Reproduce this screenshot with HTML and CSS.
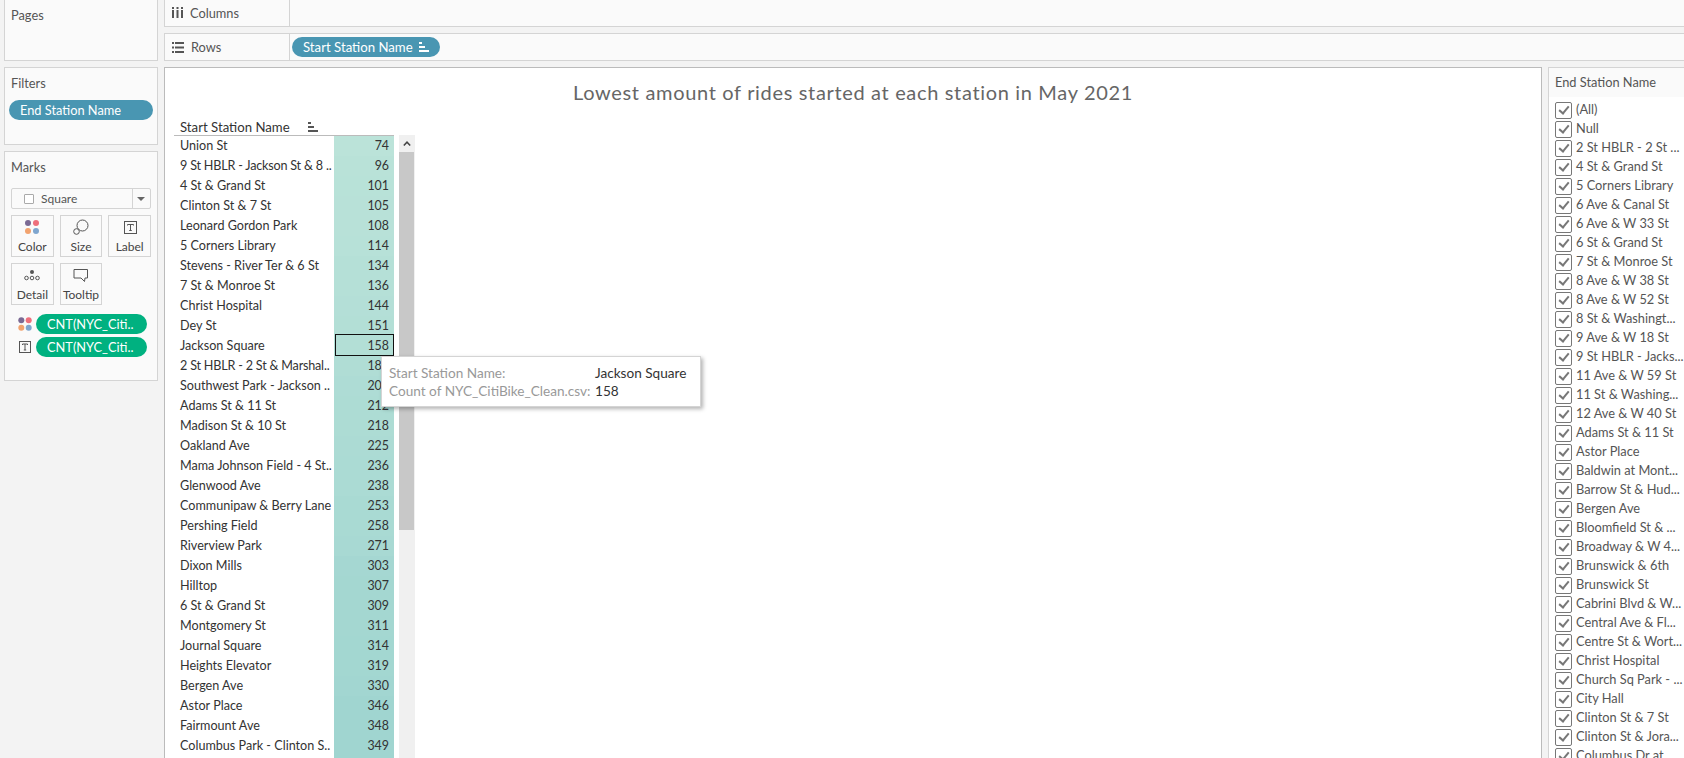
FILE: index.html
```html
<!DOCTYPE html>
<html lang="en">
<head>
    <meta charset="UTF-8">
    <meta name="viewport" content="width=device-width, initial-scale=1.0">
    <title>Lowest amount of rides started at each station in May 2021</title>
    <link rel="stylesheet" href="styles.css">
</head>
<body>
    <div class="page">
        <div class="side">
            <div class="card pages-card"><div class="card-title">Pages</div></div>
            <div class="card filters-card">
                <div class="card-title">Filters</div>
                <div class="chip chip-blue chip-filter">End Station Name</div>
            </div>
            <div class="card marks-card">
                <div class="card-title">Marks</div>
                <div class="mark-select">
                    <span class="square-box"></span>
                    <span class="mark-select-text">Square</span>
                    <span class="mark-select-arrow"></span>
                </div>
                <div class="mark-buttons">
                    <div class="mark-button">
                        <svg class="mark-icon" width="16" height="16" viewBox="0 0 16 16"><circle cx="4" cy="4" r="3" fill="#7b6a94"/><circle cx="12" cy="4" r="3" fill="#ee6f7c"/><circle cx="4" cy="12" r="3" fill="#f2a36f"/><circle cx="12" cy="12" r="3" fill="#7fa6cf"/></svg>
                        <span>Color</span>
                    </div>
                    <div class="mark-button">
                        <svg class="mark-icon" width="16" height="16" viewBox="0 0 16 16" fill="none" stroke="#555"><circle cx="9.500" cy="6.500" r="5.500"/><circle cx="3.500" cy="12.500" r="2.800" fill="#fafafa"/></svg>
                        <span>Size</span>
                    </div>
                    <div class="mark-button">
                        <svg class="mark-icon" width="16" height="16" viewBox="0 0 16 16" fill="none" stroke="#555"><rect x="2.500" y="2.500" width="12" height="12"/><path d="M5.500 6.500V5.500h6v1M8.500 5.500v6M7.200 11.500h2.600"/></svg>
                        <span>Label</span>
                    </div>
                    <div class="mark-button">
                        <svg class="mark-icon" width="16" height="16" viewBox="0 0 16 16" fill="none" stroke="#555"><circle cx="8" cy="5" r="2" fill="#555" stroke="none"/><circle cx="2.500" cy="11" r="1.800"/><circle cx="8" cy="11" r="1.800"/><circle cx="13.500" cy="11" r="1.800"/></svg>
                        <span>Detail</span>
                    </div>
                    <div class="mark-button">
                        <svg class="mark-icon" width="16" height="16" viewBox="0 0 16 16" fill="none" stroke="#555"><path d="M1 2.500h13.500v8.500h-2.500l-0.500 3.500-3.500-3.500H1z"/></svg>
                        <span>Tooltip</span>
                    </div>
                </div>
                <div class="mark-field">
                    <svg width="14" height="14" viewBox="0 0 14 14"><circle cx="3.300" cy="3.300" r="3" fill="#7b6a94"/><circle cx="10.700" cy="3.300" r="3" fill="#ee6f7c"/><circle cx="3.300" cy="10.700" r="3" fill="#f2a36f"/><circle cx="10.700" cy="10.700" r="3" fill="#7fa6cf"/></svg>
                    <div class="chip chip-green">CNT(NYC_Citi..</div>
                </div>
                <div class="mark-field">
                    <svg width="14" height="14" viewBox="0 0 14 14" fill="none" stroke="#555"><rect x="1.500" y="1.500" width="11" height="11"/><path d="M4.500 5V4h5v1M7 4v6M5.800 10h2.400"/></svg>
                    <div class="chip chip-green">CNT(NYC_Citi..</div>
                </div>
            </div>
        </div>

        <div class="main">
            <div class="shelf shelf-columns">
                <div class="shelf-label">
                    <svg width="11" height="11" viewBox="0 0 11 11" fill="#555"><path d="M0 0h2v2H0zM4.500 0h2v2h-2zM9 0h2v2H9zM0 3h2v8H0zM4.500 3h2v8h-2zM9 3h2v8H9z"/></svg>
                    <span>Columns</span>
                </div>
            </div>
            <div class="shelf shelf-rows">
                <div class="shelf-label">
                    <svg width="12" height="11" viewBox="0 0 12 11" fill="#555"><path d="M0 0h2v2H0zM3 0h9v2H3zM0 4.500h2v2H0zM3 4.500h9v2H3zM0 9h2v2H0zM3 9h9v2H3z"/></svg>
                    <span>Rows</span>
                </div>
                <div class="chip chip-blue chip-rows">
                    Start Station Name
                    <svg width="10" height="10" viewBox="0 0 10 10" fill="#fff"><path d="M0 0h3v2H0zM0 4h6v2H0zM0 8h10v2H0z"/></svg>
                </div>
            </div>

            <div class="work">
                <div class="viz">
                    <div class="viz-title">Lowest amount of rides started at each station in May 2021</div>
                    <div class="viz-body">
                        <div class="table">
                            <div class="table-head">
                                <span>Start Station Name</span>
                                <svg width="10" height="10" viewBox="0 0 10 10" fill="#555"><path d="M0 0h3v2H0zM0 4h6v2H0zM0 8h10v2H0z"/></svg>
                            </div>
                            <div class="row"><div class="name">Union St</div><div class="bar" style="background:#bbe3d9">74</div></div>
                            <div class="row"><div class="name name-tight">9 St HBLR - Jackson St &amp; 8 ..</div><div class="bar" style="background:#b9e2d8">96</div></div>
                            <div class="row"><div class="name">4 St &amp; Grand St</div><div class="bar" style="background:#b8e2d8">101</div></div>
                            <div class="row"><div class="name">Clinton St &amp; 7 St</div><div class="bar" style="background:#b8e1d8">105</div></div>
                            <div class="row"><div class="name">Leonard Gordon Park</div><div class="bar" style="background:#b8e1d8">108</div></div>
                            <div class="row"><div class="name">5 Corners Library</div><div class="bar" style="background:#b7e1d8">114</div></div>
                            <div class="row"><div class="name">Stevens - River Ter &amp; 6 St</div><div class="bar" style="background:#b5e0d7">134</div></div>
                            <div class="row"><div class="name">7 St &amp; Monroe St</div><div class="bar" style="background:#b5e0d7">136</div></div>
                            <div class="row"><div class="name">Christ Hospital</div><div class="bar" style="background:#b4dfd7">144</div></div>
                            <div class="row"><div class="name">Dey St</div><div class="bar" style="background:#b3dfd6">151</div></div>
                            <div class="row"><div class="name">Jackson Square</div><div class="bar bar-selected" style="background:#b3dfd6">158</div></div>
                            <div class="row"><div class="name name-tight">2 St HBLR - 2 St &amp; Marshal..</div><div class="bar" style="background:#b0ddd5">186</div></div>
                            <div class="row"><div class="name">Southwest Park - Jackson ..</div><div class="bar" style="background:#aedcd5">206</div></div>
                            <div class="row"><div class="name">Adams St &amp; 11 St</div><div class="bar" style="background:#addcd4">212</div></div>
                            <div class="row"><div class="name">Madison St &amp; 10 St</div><div class="bar" style="background:#addcd4">218</div></div>
                            <div class="row"><div class="name">Oakland Ave</div><div class="bar" style="background:#acdbd4">225</div></div>
                            <div class="row"><div class="name">Mama Johnson Field - 4 St..</div><div class="bar" style="background:#abdbd4">236</div></div>
                            <div class="row"><div class="name">Glenwood Ave</div><div class="bar" style="background:#abdbd4">238</div></div>
                            <div class="row"><div class="name">Communipaw &amp; Berry Lane</div><div class="bar" style="background:#a9dad3">253</div></div>
                            <div class="row"><div class="name">Pershing Field</div><div class="bar" style="background:#a9dad3">258</div></div>
                            <div class="row"><div class="name">Riverview Park</div><div class="bar" style="background:#a8d9d3">271</div></div>
                            <div class="row"><div class="name">Dixon Mills</div><div class="bar" style="background:#a5d7d2">303</div></div>
                            <div class="row"><div class="name">Hilltop</div><div class="bar" style="background:#a4d7d1">307</div></div>
                            <div class="row"><div class="name">6 St &amp; Grand St</div><div class="bar" style="background:#a4d7d1">309</div></div>
                            <div class="row"><div class="name">Montgomery St</div><div class="bar" style="background:#a4d7d1">311</div></div>
                            <div class="row"><div class="name">Journal Square</div><div class="bar" style="background:#a3d7d1">314</div></div>
                            <div class="row"><div class="name">Heights Elevator</div><div class="bar" style="background:#a3d7d1">319</div></div>
                            <div class="row"><div class="name">Bergen Ave</div><div class="bar" style="background:#a2d6d1">330</div></div>
                            <div class="row"><div class="name">Astor Place</div><div class="bar" style="background:#a0d5d0">346</div></div>
                            <div class="row"><div class="name">Fairmount Ave</div><div class="bar" style="background:#a0d5d0">348</div></div>
                            <div class="row"><div class="name">Columbus Park - Clinton S..</div><div class="bar" style="background:#a0d5d0">349</div></div>
                            <div class="row"><div class="name"></div><div class="bar" style="background:#a0d5d0"></div></div>
                        </div>
                        <div class="scrollbar">
                            <div class="scroll-up">
                                <svg width="8" height="5" viewBox="0 0 8 5" fill="none" stroke="#444" stroke-width="1.500"><path d="M0.800 4.500L4 1.200l3.200 3.300"/></svg>
                            </div>
                            <div class="scroll-thumb"></div>
                        </div>
                    </div>
                </div>

                <div class="filter-panel">
                    <div class="filter-head">End Station Name</div>
                    <div class="filter-list">
                        <div class="check-item">(All)</div>
                        <div class="check-item">Null</div>
                        <div class="check-item">2 St HBLR - 2 St ...</div>
                        <div class="check-item">4 St &amp; Grand St</div>
                        <div class="check-item">5 Corners Library</div>
                        <div class="check-item">6 Ave &amp; Canal St</div>
                        <div class="check-item">6 Ave &amp; W 33 St</div>
                        <div class="check-item">6 St &amp; Grand St</div>
                        <div class="check-item">7 St &amp; Monroe St</div>
                        <div class="check-item">8 Ave &amp; W 38 St</div>
                        <div class="check-item">8 Ave &amp; W 52 St</div>
                        <div class="check-item">8 St &amp; Washingt...</div>
                        <div class="check-item">9 Ave &amp; W 18 St</div>
                        <div class="check-item">9 St HBLR - Jacks...</div>
                        <div class="check-item">11 Ave &amp; W 59 St</div>
                        <div class="check-item">11 St &amp; Washing...</div>
                        <div class="check-item">12 Ave &amp; W 40 St</div>
                        <div class="check-item">Adams St &amp; 11 St</div>
                        <div class="check-item">Astor Place</div>
                        <div class="check-item">Baldwin at Mont...</div>
                        <div class="check-item">Barrow St &amp; Hud...</div>
                        <div class="check-item">Bergen Ave</div>
                        <div class="check-item">Bloomfield St &amp; ...</div>
                        <div class="check-item">Broadway &amp; W 4...</div>
                        <div class="check-item">Brunswick &amp; 6th</div>
                        <div class="check-item">Brunswick St</div>
                        <div class="check-item">Cabrini Blvd &amp; W...</div>
                        <div class="check-item">Central Ave &amp; Fl...</div>
                        <div class="check-item">Centre St &amp; Wort...</div>
                        <div class="check-item">Christ Hospital</div>
                        <div class="check-item">Church Sq Park - ...</div>
                        <div class="check-item">City Hall</div>
                        <div class="check-item">Clinton St &amp; 7 St</div>
                        <div class="check-item">Clinton St &amp; Jora...</div>
                        <div class="check-item">Columbus Dr at</div>
                    </div>
                </div>
            </div>
        </div>

        <div class="tooltip">
            <div class="tooltip-label">Start Station Name:</div>
            <div class="tooltip-value">Jackson Square</div>
            <div class="tooltip-label">Count of NYC_CitiBike_Clean.csv:</div>
            <div class="tooltip-value">158</div>
        </div>
    </div>
</body>
</html>
```

FILE: styles.css
```css
* {
    margin: 0;
    padding: 0;
    box-sizing: border-box;
}

body {
    font-family: Lato, "Open Sans", sans-serif;
    font-size: 12.8px;
    color: #444;
    background: #f3f3f3;
    height: 100vh;
    overflow: hidden;
}

.page {
    position: relative;
    display: flex;
    gap: 6px;
    height: 758px;
    padding-left: 4px;
    overflow: hidden;
}

/* left column */
.side {
    display: flex;
    flex-direction: column;
    gap: 6px;
    width: 154px;
    flex-shrink: 0;
}

.card {
    background: #fafafa;
    border: 1px solid #d4d4d4;
    padding: 0 6px;
}

.card-title {
    color: #555;
    line-height: 16px;
}

.pages-card {
    height: 61px;
    border-top: none;
    padding-top: 7px;
}

.filters-card {
    height: 78px;
    padding: 7px 4px 0;
}

.filters-card .card-title {
    padding-left: 2px;
    margin-bottom: 9px;
}

.marks-card {
    height: 230px;
    padding-top: 7px;
}

.chip {
    display: flex;
    align-items: center;
    height: 20px;
    border-radius: 10px;
    color: #fff;
    white-space: nowrap;
}

.chip-blue {
    background: #4996b2;
}

.chip-green {
    background: #00b180;
    width: 111px;
    padding-left: 11px;
}

.chip-filter {
    padding-left: 11px;
}

.mark-select {
    display: flex;
    align-items: center;
    height: 21px;
    margin-top: 13px;
    background: #fafafa;
    border: 1px solid #d4d4d4;
    border-radius: 2px;
    padding-left: 12px;
    font-size: 12px;
}

.square-box {
    width: 10px;
    height: 10px;
    border: 1px solid #aaa;
    border-radius: 1px;
    background: #fff;
}

.mark-select-text {
    margin-left: 7px;
    flex: 1;
    color: #555;
}

.mark-select-arrow {
    position: relative;
    width: 18px;
    height: 100%;
    border-left: 1px solid #d4d4d4;
}

.mark-select-arrow::after {
    content: '';
    position: absolute;
    top: 8px;
    left: 4px;
    border-left: 4px solid transparent;
    border-right: 4px solid transparent;
    border-top: 4px solid #666;
}

.mark-buttons {
    display: grid;
    grid-template-columns: repeat(3, 1fr);
    gap: 6px;
    margin-top: 6px;
}

.mark-button {
    height: 42px;
    border: 1px solid #d4d4d4;
    display: flex;
    flex-direction: column;
    align-items: center;
    justify-content: flex-end;
    gap: 4px;
    padding-bottom: 2px;
    color: #444;
    font-size: 12px;
}

.mark-field {
    display: flex;
    align-items: center;
    gap: 4px;
    margin-left: 7px;
    margin-top: 3px;
}

.mark-buttons + .mark-field {
    margin-top: 9px;
}

/* shelves */
.main {
    flex: 1;
    display: flex;
    flex-direction: column;
    gap: 6px;
    min-width: 0;
}

.shelf {
    display: flex;
    align-items: center;
    background: #fafafa;
    border: 1px solid #d4d4d4;
    border-right: none;
}

.shelf-columns {
    height: 27px;
    border-top: none;
}

.shelf-rows {
    height: 28px;
}

.shelf-label {
    display: flex;
    align-items: center;
    gap: 7px;
    width: 125px;
    height: 100%;
    padding-left: 7px;
    border-right: 1px solid #d4d4d4;
    color: #555;
}

.shelf-columns .shelf-label {
    padding-bottom: 1px;
}

.chip-rows {
    width: 148px;
    margin-left: 2px;
    padding-left: 11px;
    gap: 6px;
    font-size: 13.2px;
}

/* view */
.work {
    flex: 1;
    display: flex;
    gap: 6px;
    min-height: 0;
}

.viz {
    width: 1378px;
    flex-shrink: 0;
    background: #fff;
    border: 1px solid #bbb;
    border-bottom: none;
    padding-left: 9px;
}

.viz-title {
    height: 47px;
    margin-left: -9px;
    padding-top: 11px;
    text-align: center;
    font-size: 20px;
    line-height: 27px;
    color: #666;
    letter-spacing: 0.66px;
}

.viz-body {
    display: flex;
    gap: 5px;
}

.table {
    width: 220px;
    color: #333;
}

.table-head {
    display: flex;
    align-items: center;
    justify-content: space-between;
    height: 21px;
    padding: 3px 76px 0 6px;
    border-bottom: 1px solid #bbb;
    font-size: 13.2px;
}

.row {
    display: flex;
    height: 20px;
    line-height: 19px;
    font-size: 12.6px;
}

.name {
    width: 160px;
    padding-left: 6px;
    white-space: nowrap;
    overflow: hidden;
}

.name-tight {
    letter-spacing: -0.2px;
}

.bar {
    position: relative;
    width: 60px;
    padding-right: 5px;
    text-align: right;
    font-size: 12.4px;
}

.bar-selected::after {
    content: '';
    position: absolute;
    inset: -2px 0 0 1px;
    border: 1px solid #111;
}

.scrollbar {
    width: 16px;
    margin-top: 20px;
    height: 640px;
    background: #f0f0f0;
}

.scroll-up {
    display: flex;
    align-items: center;
    justify-content: center;
    height: 17px;
}

.scroll-thumb {
    height: 378px;
    margin-right: 1px;
    background: #c8c8c8;
}

/* right filter card */
.filter-panel {
    flex: 1;
    background: #fff;
    border-left: 1px solid #d4d4d4;
    border-top: 1px solid #d4d4d4;
}

.filter-head {
    height: 29px;
    line-height: 28px;
    padding-left: 6px;
    background: #fafafa;
    color: #555;
}

.filter-list {
    padding: 3px 0 0 6px;
}

.check-item {
    position: relative;
    height: 19px;
    line-height: 19px;
    padding-left: 21px;
    color: #555;
    white-space: nowrap;
}

.check-item::before {
    content: '';
    position: absolute;
    left: 0;
    top: 2px;
    width: 15px;
    height: 15px;
    border: 1px solid #777;
    border-radius: 2px;
    background: #fff;
}

.check-item::after {
    content: '';
    position: absolute;
    left: 6px;
    top: 4px;
    width: 4px;
    height: 8px;
    border-right: 2px solid #777;
    border-bottom: 2px solid #777;
    transform: rotate(40deg);
}

/* hover tooltip */
.tooltip {
    position: absolute;
    left: 381px;
    top: 356px;
    width: 320px;
    height: 51px;
    display: grid;
    grid-template-columns: 206px 1fr;
    grid-auto-rows: 18px;
    align-content: center;
    padding-left: 7px;
    background: #fff;
    border: 1px solid #d4d4d4;
    box-shadow: 2px 2px 4px rgba(0, 0, 0, 0.3);
    font-size: 13.6px;
    line-height: 18px;
    white-space: nowrap;
}

.tooltip-label {
    color: #999;
}

.tooltip-value {
    color: #333;
}
```
